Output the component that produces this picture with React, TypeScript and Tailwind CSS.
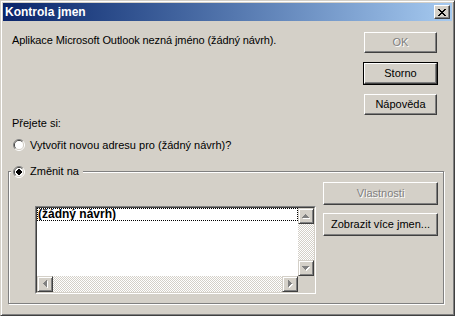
import React from "react";

const F = "font-['Liberation_Sans',Arial,sans-serif]";

function Btn({
  children,
  disabled,
  isDefault,
  className = "",
}: {
  children: React.ReactNode;
  disabled?: boolean;
  isDefault?: boolean;
  className?: string;
}) {
  const inner = (
    <div
      className={
        "flex-1 flex items-center justify-center border border-t-white border-l-white border-r-[#404040] border-b-[#404040] shadow-[inset_-1px_-1px_0_#808080] bg-[#d4d0c8] " +
        (disabled ? "text-[#808080] [text-shadow:1px_1px_0_#fff]" : "text-black")
      }
    >
      {children}
    </div>
  );
  return (
    <div className={"h-[23px] flex " + (isDefault ? "border border-black " : "") + className}>
      {inner}
    </div>
  );
}

function Radio({ id, checked }: { id: string; checked?: boolean }) {
  return (
    <svg width="12" height="12" viewBox="0 0 12 12" className="shrink-0">
      <defs>
        <clipPath id={id + "tl"}>
          <polygon points="0,0 12,0 0,12" />
        </clipPath>
        <clipPath id={id + "br"}>
          <polygon points="12,0 12,12 0,12" />
        </clipPath>
      </defs>
      <circle cx="6" cy="6" r="5.5" fill="none" stroke="#808080" strokeWidth="1" clipPath={`url(#${id}tl)`} />
      <circle cx="6" cy="6" r="5.5" fill="none" stroke="#ffffff" strokeWidth="1" clipPath={`url(#${id}br)`} />
      <circle cx="6" cy="6" r="4.5" fill="none" stroke="#404040" strokeWidth="1" clipPath={`url(#${id}tl)`} />
      <circle cx="6" cy="6" r="4.5" fill="none" stroke="#d4d0c8" strokeWidth="1" clipPath={`url(#${id}br)`} />
      <circle cx="6" cy="6" r="4" fill="#ffffff" />
      {checked && <rect x="4" y="4" width="4" height="4" fill="#000" />}
      {checked && <rect x="5" y="3" width="2" height="6" fill="#000" />}
      {checked && <rect x="3" y="5" width="6" height="2" fill="#000" />}
    </svg>
  );
}

function Arrow({ dir }: { dir: "up" | "down" | "left" | "right" }) {
  const cells: [number, number][] = [];
  for (let r = 0; r < 4; r++) {
    for (let c = 3 - r; c <= 3 + r; c++) {
      let x = c,
        y = r;
      if (dir === "down") y = 3 - r;
      if (dir === "left") {
        x = r;
        y = c;
      }
      if (dir === "right") {
        x = 3 - r;
        y = c;
      }
      cells.push([x, y]);
    }
  }
  const horiz = dir === "up" || dir === "down";
  const w = horiz ? 8 : 5;
  const h = horiz ? 5 : 8;
  return (
    <svg width={w} height={h} viewBox={`0 0 ${w} ${h}`} shapeRendering="crispEdges">
      {cells.map(([x, y], i) => (
        <rect key={"w" + i} x={x + 1} y={y + 1} width="1" height="1" fill="#ffffff" />
      ))}
      {cells.map(([x, y], i) => (
        <rect key={"g" + i} x={x} y={y} width="1" height="1" fill="#808080" />
      ))}
    </svg>
  );
}

function SBtn({ dir }: { dir: "up" | "down" | "left" | "right" }) {
  return (
    <div className="w-[16px] h-[16px] shrink-0 flex border border-t-[#d4d0c8] border-l-[#d4d0c8] border-r-[#404040] border-b-[#404040]">
      <div className="flex-1 flex items-center justify-center bg-[#d4d0c8] shadow-[inset_1px_1px_0_#fff,inset_-1px_-1px_0_#808080]">
        <Arrow dir={dir} />
      </div>
    </div>
  );
}

const track =
  "bg-[repeating-conic-gradient(#d4d0c8_0_25%,#ffffff_0_50%)] bg-[length:2px_2px]";

export default function App() {
  return (
    <div
      className={
        "w-[455px] h-[316px] bg-[#d4d0c8] border border-t-[#d4d0c8] border-l-[#d4d0c8] border-r-[#404040] border-b-[#404040] shadow-[inset_1px_1px_0_#fff,inset_-1px_-1px_0_#808080] p-[2px] flex flex-col text-[11px] leading-[13px] text-black select-none " +
        F
      }
    >
      {/* Title bar */}
      <div className="h-[18px] shrink-0 flex items-center justify-between bg-linear-to-r from-[#0a246a] to-[#a6caf0] pl-[2px] pr-[2px]">
        <span className="text-white font-bold text-[12px]">Kontrola jmen</span>
        <div className="w-[16px] h-[14px] flex border border-t-white border-l-white border-r-[#404040] border-b-[#404040]">
          <div className="flex-1 flex items-center justify-center bg-[#d4d0c8] shadow-[inset_-1px_-1px_0_#808080]">
            <svg width="8" height="7" viewBox="0 0 8 7" shapeRendering="crispEdges">
              {[0, 1, 2, 3, 4, 5, 6].map((i) => (
                <g key={i}>
                  <rect x={i} y={i} width="2" height="1" fill="#000" />
                  <rect x={6 - i} y={i} width="2" height="1" fill="#000" />
                </g>
              ))}
            </svg>
          </div>
        </div>
      </div>

      {/* Content */}
      <div className="flex-1 flex flex-col">
        <div className="flex items-start">
          <div className="flex-1 pl-[9px] pt-[13px] tracking-[-0.1px]">
            Aplikace Microsoft Outlook nezná jméno (žádný návrh).
          </div>
          <div className="w-[75px] mr-[14px] mt-[10px] flex flex-col gap-[8px]">
            <Btn disabled className="m-px !h-[21px]">OK</Btn>
            <Btn isDefault>Storno</Btn>
            <Btn className="m-px !h-[21px]">Nápověda</Btn>
          </div>
        </div>

        <div className="pl-[9px] mt-[1px]">Přejete si:</div>

        <div className="flex items-center gap-[5px] pl-[10px] mt-[9px] h-[12px]">
          <Radio id="r1" />
          <span>Vytvořit novou adresu pro (žádný návrh)?</span>
        </div>

        {/* Group box */}
        <div className="relative ml-[5px] mt-[20px] w-[436px] h-[133px] border border-[#808080] shadow-[inset_1px_1px_0_#fff,1px_1px_0_#fff]">
          <div className="absolute left-[2px] top-[-7px] h-[13px] flex items-center gap-[5px] pl-[2px] pr-[4px] bg-[#d4d0c8]">
            <Radio id="r2" checked />
            <span>Změnit na</span>
          </div>

          <div className="flex items-start pl-[26px]">
            {/* List box */}
            <div className="mt-[34px] w-[281px] h-[88px] flex border border-t-[#808080] border-l-[#808080] border-r-white border-b-white">
              <div className="flex-1 flex flex-col border border-t-[#404040] border-l-[#404040] border-r-[#d4d0c8] border-b-[#d4d0c8] bg-white">
                <div className="flex flex-1">
                  <div className="flex-1 bg-white">
                    <div className="h-[13px] border border-dotted border-black font-bold text-[12px] leading-[11px] whitespace-nowrap overflow-hidden">
                      (žádný návrh)
                    </div>
                  </div>
                  <div className="w-[16px] flex flex-col">
                    <SBtn dir="up" />
                    <div className={"flex-1 " + track} />
                    <SBtn dir="down" />
                  </div>
                </div>
                <div className="flex h-[16px]">
                  <SBtn dir="left" />
                  <div className={"flex-1 " + track} />
                  <SBtn dir="right" />
                  <div className="w-[16px] bg-[#d4d0c8]" />
                </div>
              </div>
            </div>

            <div className="ml-[7px] mt-[10px] w-[115px] flex flex-col gap-[8px]">
              <Btn disabled>Vlastnosti</Btn>
              <Btn>Zobrazit více jmen...</Btn>
            </div>
          </div>
        </div>
      </div>
    </div>
  );
}
